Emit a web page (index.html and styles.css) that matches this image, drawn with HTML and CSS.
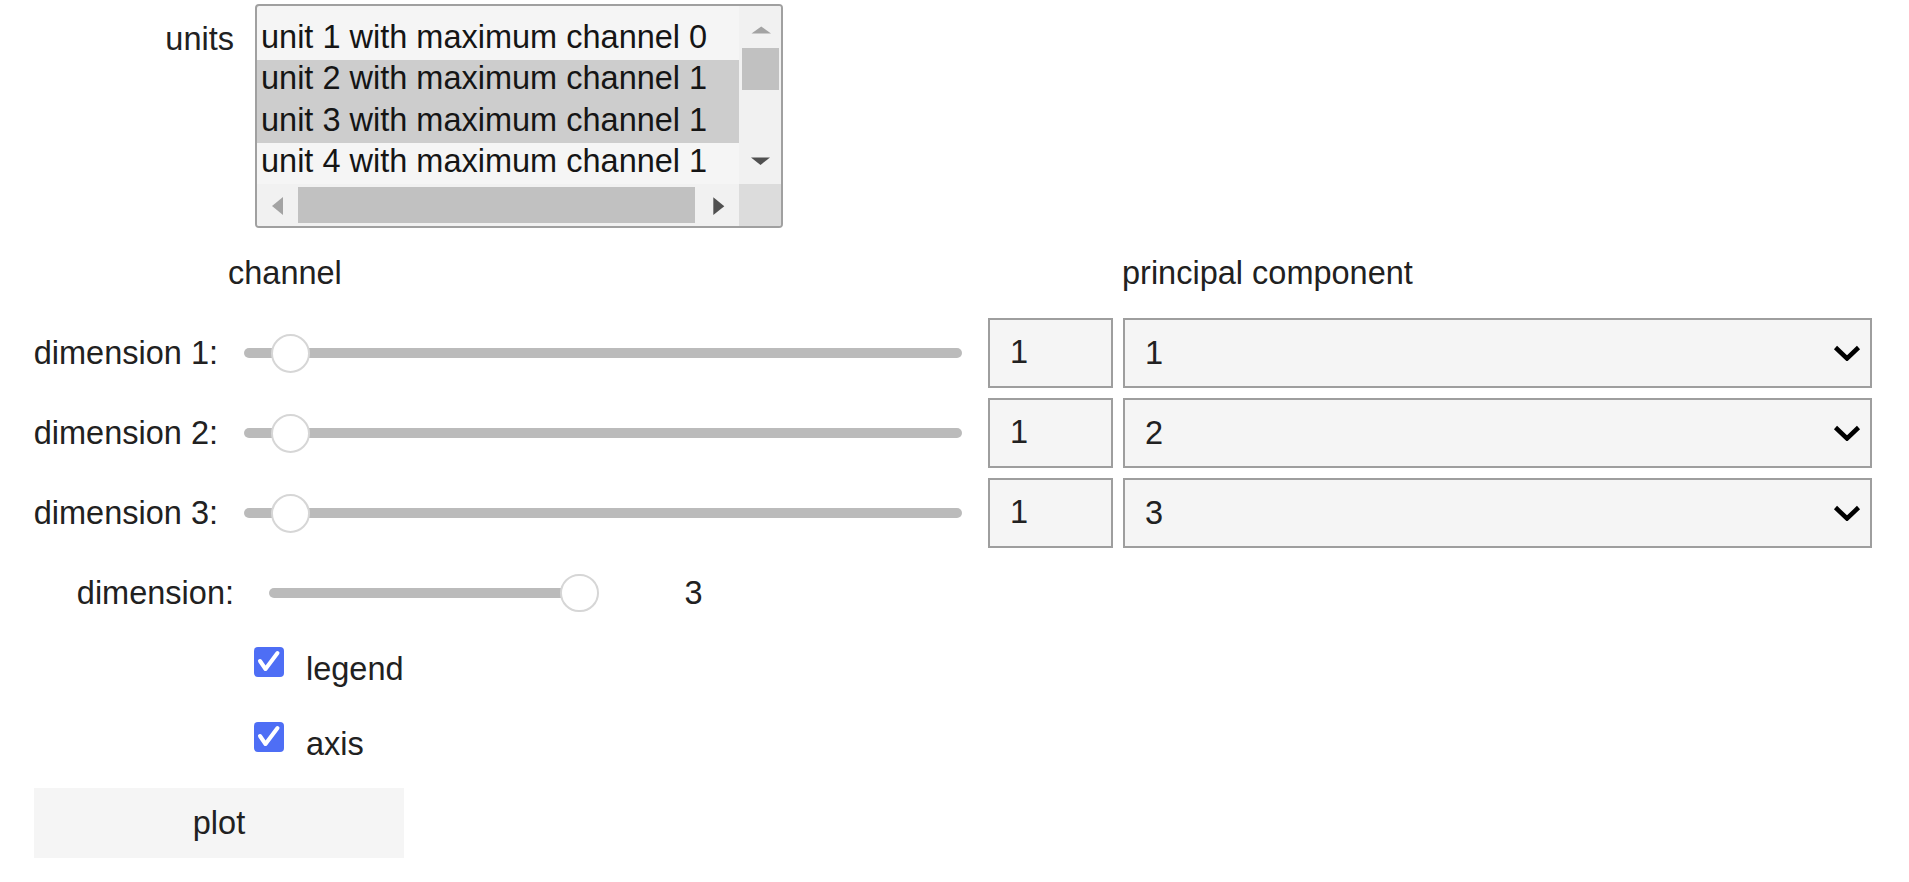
FILE: index.html
```html
<!DOCTYPE html>
<html>
<head>
<meta charset="utf-8">
<title>units</title>
<link rel="stylesheet" href="styles.css">
</head>
<body>
<div class="app">
  <div class="units-row">
    <div class="units-label">units</div>
    <div class="listbox">
      <div class="list">
        <div class="opt">unit 1 with maximum channel 0</div>
        <div class="opt sel">unit 2 with maximum channel 1</div>
        <div class="opt sel">unit 3 with maximum channel 1</div>
        <div class="opt">unit 4 with maximum channel 1</div>
      </div>
      <div class="vscroll">
        <div class="sb-btn"><svg width="42" height="42" viewBox="0 0 42 42"><polygon points="12.5,27.5 32,27.5 22.25,20.5" fill="#a3a3a3"/></svg></div>
        <div class="vtrack"><div class="vthumb"></div></div>
        <div class="sb-btn"><svg width="42" height="42" viewBox="0 0 42 42"><polygon points="12,15.5 31,15.5 21.5,23" fill="#505050"/></svg></div>
      </div>
      <div class="hscroll">
        <div class="sb-btn"><svg width="42" height="42" viewBox="0 0 42 42"><polygon points="26,13 26,31 15,22" fill="#a3a3a3"/></svg></div>
        <div class="htrack"><div class="hthumb"></div></div>
        <div class="sb-btn"><svg width="42" height="42" viewBox="0 0 42 42"><polygon points="16.3,13.3 16.3,31 27.3,22.15" fill="#505050"/></svg></div>
      </div>
      <div class="corner"></div>
    </div>
  </div>

  <div class="hdr">
    <div class="hdr-channel">channel</div>
    <div class="hdr-pc">principal component</div>
  </div>

  <div class="dim-row">
    <div class="dim-label">dimension 1:</div>
    <div class="slider wide"><div class="track"></div><div class="handle h-min"></div></div>
    <div class="numbox">1</div>
    <div class="dropdown"><span>1</span><svg width="28" height="16" viewBox="0 0 28 16"><polyline points="2.5,2.5 14,13.5 25.5,2.5" fill="none" stroke="#000" stroke-width="4.5"/></svg></div>
  </div>
  <div class="dim-row">
    <div class="dim-label">dimension 2:</div>
    <div class="slider wide"><div class="track"></div><div class="handle h-min"></div></div>
    <div class="numbox">1</div>
    <div class="dropdown"><span>2</span><svg width="28" height="16" viewBox="0 0 28 16"><polyline points="2.5,2.5 14,13.5 25.5,2.5" fill="none" stroke="#000" stroke-width="4.5"/></svg></div>
  </div>
  <div class="dim-row">
    <div class="dim-label">dimension 3:</div>
    <div class="slider wide"><div class="track"></div><div class="handle h-min"></div></div>
    <div class="numbox">1</div>
    <div class="dropdown"><span>3</span><svg width="28" height="16" viewBox="0 0 28 16"><polyline points="2.5,2.5 14,13.5 25.5,2.5" fill="none" stroke="#000" stroke-width="4.5"/></svg></div>
  </div>

  <div class="dim-row dim-total">
    <div class="dim-label">dimension:</div>
    <div class="slider short"><div class="track"></div><div class="handle h-max"></div></div>
    <div class="readout">3</div>
  </div>

  <div class="check-row">
    <div class="checkbox"><svg width="30" height="30" viewBox="0 0 30 30"><polyline points="6,14 11.5,22 23.5,6" fill="none" stroke="#fff" stroke-width="4" stroke-linecap="round" stroke-linejoin="round"/></svg></div>
    <span class="check-text">legend</span>
  </div>
  <div class="check-row">
    <div class="checkbox"><svg width="30" height="30" viewBox="0 0 30 30"><polyline points="6,14 11.5,22 23.5,6" fill="none" stroke="#fff" stroke-width="4" stroke-linecap="round" stroke-linejoin="round"/></svg></div>
    <span class="check-text">axis</span>
  </div>

  <div class="btn">plot</div>
</div>
</body>
</html>
```

FILE: styles.css
```css
* { box-sizing: border-box; }

body {
  margin: 0;
  background: #ffffff;
  font-family: "Liberation Sans", Arial, sans-serif;
  font-size: 32.5px;
  color: #212121;
}

.app {
  display: flex;
  flex-direction: column;
  align-items: flex-start;
}

/* units select */
.units-row {
  display: flex;
  align-items: flex-start;
  margin-top: 4px;
  padding-left: 34px;
}

.units-label {
  width: 200px;
  margin-right: 21px;
  text-align: right;
  line-height: 70px;
}

.listbox {
  width: 528px;
  height: 224px;
  border: 2px solid #a0a0a0;
  border-radius: 4px;
  background: #f5f5f5;
  display: grid;
  grid-template-columns: 482px 42px;
  grid-template-rows: 178px 42px;
  overflow: hidden;
}

.list {
  padding-top: 12.5px;
  overflow: hidden;
}

.opt {
  height: 41.5px;
  line-height: 36px;
  padding-left: 4px;
  white-space: nowrap;
  color: #151515;
}

.opt.sel { background: #cdcdcd; }

.vscroll {
  background: #f1f1f1;
  display: flex;
  flex-direction: column;
}

.sb-btn {
  width: 42px;
  height: 42px;
  flex: none;
}

.sb-btn svg { display: block; }

.vtrack { flex: 1; }

.vthumb {
  margin-left: 3px;
  width: 37px;
  height: 42px;
  background: #c1c1c1;
}

.hscroll {
  background: #f1f1f1;
  display: flex;
}

.htrack { flex: 1; }

.hthumb {
  margin-top: 2.7px;
  margin-left: -1px;
  width: 397px;
  height: 36.6px;
  background: #c1c1c1;
}

.corner { background: #dcdcdc; }

/* header */
.hdr {
  display: flex;
  align-items: center;
  height: 70px;
  margin: 10px 0 5px;
}

.hdr-channel {
  margin-left: 228px;
  width: 894px;
}

/* dimension rows */
.dim-row {
  display: flex;
  align-items: center;
  height: 70px;
  margin: 5px 0;
  padding-left: 18px;
}

.dim-label {
  width: 200px;
  flex: none;
  text-align: right;
  white-space: nowrap;
}

.slider {
  position: relative;
  height: 40px;
  flex: none;
  display: flex;
  align-items: center;
}

.slider.wide {
  width: 718px;
  margin-left: 26px;
}

.track {
  width: 100%;
  height: 10px;
  border-radius: 5px;
  background: #bbbbbb;
}

.handle {
  position: absolute;
  top: 0.5px;
  width: 39px;
  height: 39px;
  border-radius: 50%;
  border: 2.5px solid #d6d6d6;
  background: #ffffff;
}

.handle.h-min { left: 26.5px; }

.numbox {
  width: 125px;
  height: 70px;
  margin-left: 26px;
  border: 2.5px solid #9e9e9e;
  background: #f5f5f5;
  padding-left: 20px;
  line-height: 65px;
  flex: none;
}

.dropdown {
  width: 749px;
  height: 70px;
  margin-left: 10px;
  border: 2.5px solid #9e9e9e;
  background: #f5f5f5;
  display: flex;
  align-items: center;
  justify-content: space-between;
  padding: 0 9.5px 0 20px;
  flex: none;
}

.dropdown svg { display: block; }

.dim-total { padding-left: 34px; }

.slider.short {
  width: 321px;
  margin-left: 35px;
}

.handle.h-max {
  left: 291px;
  width: 38.5px;
  height: 38.5px;
}

.readout { margin-left: 94.5px; }

/* checkboxes */
.check-row {
  display: flex;
  align-items: center;
  height: 67px;
  margin-bottom: 8px;
  padding-left: 254px;
}

.checkbox {
  width: 30px;
  height: 30px;
  border-radius: 4px;
  background: #4e6ef5;
  margin-right: 22px;
  margin-bottom: 10px;
  flex: none;
}

.checkbox svg { display: block; }

.check-text { padding-top: 5px; }

/* button */
.btn {
  margin-top: 5px;
  margin-left: 34px;
  width: 370px;
  height: 70px;
  line-height: 70px;
  text-align: center;
  background: #f5f5f5;
}
```
